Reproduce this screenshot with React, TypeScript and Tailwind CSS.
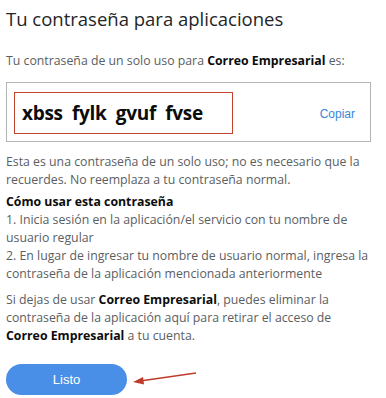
export default function App() {
  const body = "font-['Open_Sans',sans-serif] text-[12.3px] leading-[18px] text-[#5b5e62]";
  return (
    <div className="min-h-[398px] w-[386px] bg-white pl-[6px] pr-[15px] pt-[6px]">
      <h1 className="font-['Open_Sans',sans-serif] text-[18.5px] leading-[26px] text-[#232527]">
        Tu contraseña para aplicaciones
      </h1>

      <p className={`mt-[20px] ${body}`}>
        Tu contraseña de un solo uso para <b className="text-[#0c0c0c]">Correo Empresarial</b> es:
      </p>

      <div className="mt-[12px] flex h-[60px] items-start border border-[#b4b4b4] pl-[7px] pr-[15px] pt-[9px]">
        <div className="flex h-[42px] w-[219px] items-center border-[1.5px] border-[#c0422f] pl-[7px]">
          <span className="whitespace-pre font-['Open_Sans',sans-serif] text-[19px] font-bold tracking-[-0.3px] text-[#0c0c0c]">
            xbss  fylk  gvuf  fvse
          </span>
        </div>
        <span className="ml-auto mt-[13px] font-['Liberation_Sans',Arial,sans-serif] text-[12px] text-[#3a86d8]">
          Copiar
        </span>
      </div>

      <p className={`mt-[11px] ${body}`}>
        Esta es una contraseña de un solo uso; no es necesario que la recuerdes. No reemplaza a tu contraseña normal.
      </p>

      <div className={`mt-[4px] ${body}`}>
        <p className="font-bold text-[#0c0c0c]">Cómo usar esta contraseña</p>
        <p>1. Inicia sesión en la aplicación/el servicio con tu nombre de usuario regular</p>
        <p>
          2. En lugar de ingresar tu nombre de usuario normal, ingresa la contraseña de la aplicación mencionada
          anteriormente
        </p>
      </div>

      <p className={`mt-[8px] ${body}`}>
        Si dejas de usar <b className="text-[#0c0c0c]">Correo Empresarial</b>, puedes eliminar la contraseña de la
        aplicación aquí para retirar el acceso de <b className="text-[#0c0c0c]">Correo Empresarial</b> a tu cuenta.
      </p>

      <div className="mt-[19px] flex items-center">
        <button className="h-[31px] w-[121px] rounded-full bg-[#4a8fe7] font-['Liberation_Sans',Arial,sans-serif] text-[13px] text-white">
          Listo
        </button>
        <svg width="66" height="16" viewBox="0 0 66 16" className="ml-[5px] -mt-[3px]">
          <line x1="8" y1="11" x2="64" y2="3" stroke="#bf3b2c" strokeWidth="1.6" />
          <polygon points="1,12 11,7 12,14.5" fill="#bf3b2c" />
        </svg>
      </div>
    </div>
  );
}
